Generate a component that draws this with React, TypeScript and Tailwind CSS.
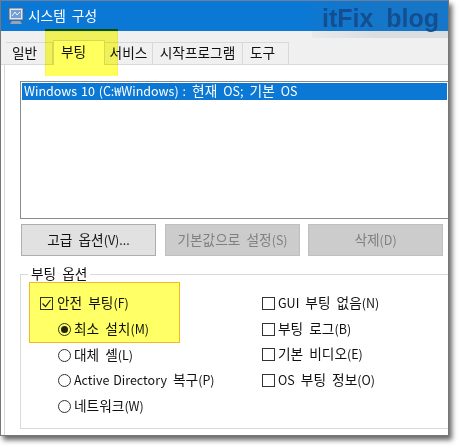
const TABS = [
  { label: '일반', className: 'w-[47px] pr-[9px]' },
  { label: '부팅', className: 'w-[52px] pr-[11px]', active: true },
  { label: '서비스', className: 'w-[48px]' },
  { label: '시작프로그램', className: 'w-[90px]' },
  { label: '도구', className: 'w-[46px] pr-[6px]' },
];

const RADIOS = [
  { label: '최소 설치(M)', checked: true },
  { label: '대체 셸(L)' },
  { label: 'Active Directory 복구(P)' },
  { label: '네트워크(W)' },
];

const CHECKS = ['GUI 부팅 없음(N)', '부팅 로그(B)', '기본 비디오(E)', 'OS 부팅 정보(O)'];

// Latin runs sit a bit smaller than the hangul in the reference
function Label({ text }: { text: string }) {
  const parts = text.split(/([A-Za-z0-9():;.₩]+(?: [A-Za-z0-9():;.₩]+)*)/);
  return (
    <span className="mb-[2px]">
      {parts.map((part, i) =>
        i % 2 === 1 ? (
          <span key={i} className="text-[12.5px] [word-spacing:1px]">
            {part}
          </span>
        ) : (
          part
        ),
      )}
    </span>
  );
}

function WindowIcon() {
  return (
    <svg width="16" height="19" viewBox="0 0 16 19" className="shrink-0">
      <rect x="1" y="1" width="14" height="12" fill="#dfe6f0" stroke="#5b6474" />
      <rect x="3" y="3" width="10" height="8" fill="#6f9fd8" />
      <path d="M4 9l3-4 2 3 3-3" fill="none" stroke="#eef4fb" strokeWidth="1" />
      <path d="M4 14h8l2 3H2z" fill="#9aa2ad" />
    </svg>
  );
}

function Radio({ checked }: { checked?: boolean }) {
  return (
    <span className="flex h-[13px] w-[13px] shrink-0 items-center justify-center rounded-full border border-[#333]">
      {checked && <span className="h-[7px] w-[7px] rounded-full bg-[#222]" />}
    </span>
  );
}

function Checkbox({ checked }: { checked?: boolean }) {
  return (
    <span className="flex h-[13px] w-[13px] shrink-0 items-center justify-center border border-[#333]">
      {checked && (
        <svg width="11" height="11" viewBox="0 0 11 11">
          <path d="M1.5 5.5l3 3 5-6.5" fill="none" stroke="#222" strokeWidth="1.2" />
        </svg>
      )}
    </span>
  );
}

export default function App() {
  return (
    <div
      className="relative h-[446px] w-[459px] overflow-hidden bg-white text-[13.7px] text-[#111] [word-spacing:3px]"
      style={{ fontFamily: '"Noto Sans CJK KR", "Noto Sans", sans-serif' }}
    >
      <div className="flex h-[436px] w-[449px] flex-col border-x border-b border-[#777] bg-white shadow-[3px_4px_5px_rgba(0,0,0,0.6)]">
        {/* Title bar */}
        <div className="flex h-[31px] shrink-0 items-center gap-[4px] border-t border-[#6b7f9f] bg-[#0a78d4] pl-[7px] text-white">
          <WindowIcon />
          <span className="mb-[2px]">시스템 구성</span>
        </div>

        {/* Tabs */}
        <div className="flex h-[34px] items-end border-b border-[#d9d9d9] bg-[#f0f0f0] pl-[5px]">
          {TABS.map((tab) => (
            <div
              key={tab.label}
              className={
                tab.active
                  ? `${tab.className} -mb-px flex h-[25px] items-start justify-center border-x border-t border-[#d9d9d9] bg-white`
                  : `${tab.className} flex h-[22px] items-center justify-center border-r border-t border-[#d9d9d9] bg-[#f0f0f0] pb-[2px]`
              }
            >
              {tab.label}
            </div>
          ))}
        </div>

        <div className="ml-[3px] flex flex-1 flex-col border-l border-[#d9d9d9] pl-[15px]">
          {/* Boot list */}
          <div className="mt-[16px] h-[138px] border border-r-0 border-[#8a8a8a] p-[1px]">
            <div className="flex h-[17px] items-center bg-[#0a78d4] pl-[2px] text-white">
              <Label text="Windows 10 (C:₩Windows) : 현재 OS; 기본 OS" />
            </div>
          </div>

          {/* Buttons */}
          <div className="mt-[5px] flex pl-[1px]">
            <div className="mr-[9px] flex h-[32px] w-[135px] items-center justify-center border border-[#adadad] bg-[#e1e1e1]">
              <Label text="고급 옵션(V)..." />
            </div>
            <div className="mr-[8px] flex h-[32px] w-[135px] items-center justify-center border border-[#bfbfbf] bg-[#cccccc] text-[#808080]">
              <Label text="기본값으로 설정(S)" />
            </div>
            <div className="flex h-[32px] w-[135px] items-center justify-center border border-[#bfbfbf] bg-[#cccccc] text-[#808080]">
              <Label text="삭제(D)" />
            </div>
          </div>

          {/* Boot options group */}
          <div className="relative mt-[18px] h-[155px] border border-r-0 border-[#d9d9d9]">
            <span className="absolute -top-[11px] left-[7px] bg-white px-[3px] leading-[18px]">부팅 옵션</span>
            <div className="flex pt-[16px]">
              <div className="w-[241px] pl-[19px]">
                <div className="flex h-[25px] items-center gap-[4px]">
                  <Checkbox checked />
                  <Label text="안전 부팅(F)" />
                </div>
                <div className="mt-[1px] flex flex-col pl-[18px]">
                  {RADIOS.map((radio) => (
                    <div key={radio.label} className="flex h-[25.5px] items-center gap-[3px]">
                      <Radio checked={radio.checked} />
                      <Label text={radio.label} />
                    </div>
                  ))}
                </div>
              </div>
              <div className="flex flex-col">
                {CHECKS.map((label) => (
                  <div key={label} className="flex h-[25.5px] items-center gap-[3px]">
                    <Checkbox />
                    <Label text={label} />
                  </div>
                ))}
              </div>
            </div>
          </div>
        </div>
      </div>

      {/* Watermark */}
      <div className="absolute left-[312px] top-0 h-[38px] w-[137px] bg-gradient-to-r from-[#5a6e86]/5 via-[#5a6e86]/15 to-[#5a6e86]/15" />
      <div className="absolute left-[322px] top-[3px] text-[25px] font-bold leading-[30px] text-[#134f90] [font-family:'Liberation_Sans',sans-serif] [word-spacing:6px]">
        itFix blog
      </div>

      {/* Yellow highlights drawn on top of the dialog */}
      <div className="absolute left-[45px] top-[29px] h-[47px] w-[73px] bg-[#ffff4d]/90 mix-blend-multiply shadow-[inset_0_2px_1px_rgba(120,130,0,0.7)]" />
      <div className="absolute left-[29px] top-[282px] h-[61px] w-[151px] border border-[#f5b921] bg-[#ffff66] mix-blend-multiply" />
    </div>
  );
}
